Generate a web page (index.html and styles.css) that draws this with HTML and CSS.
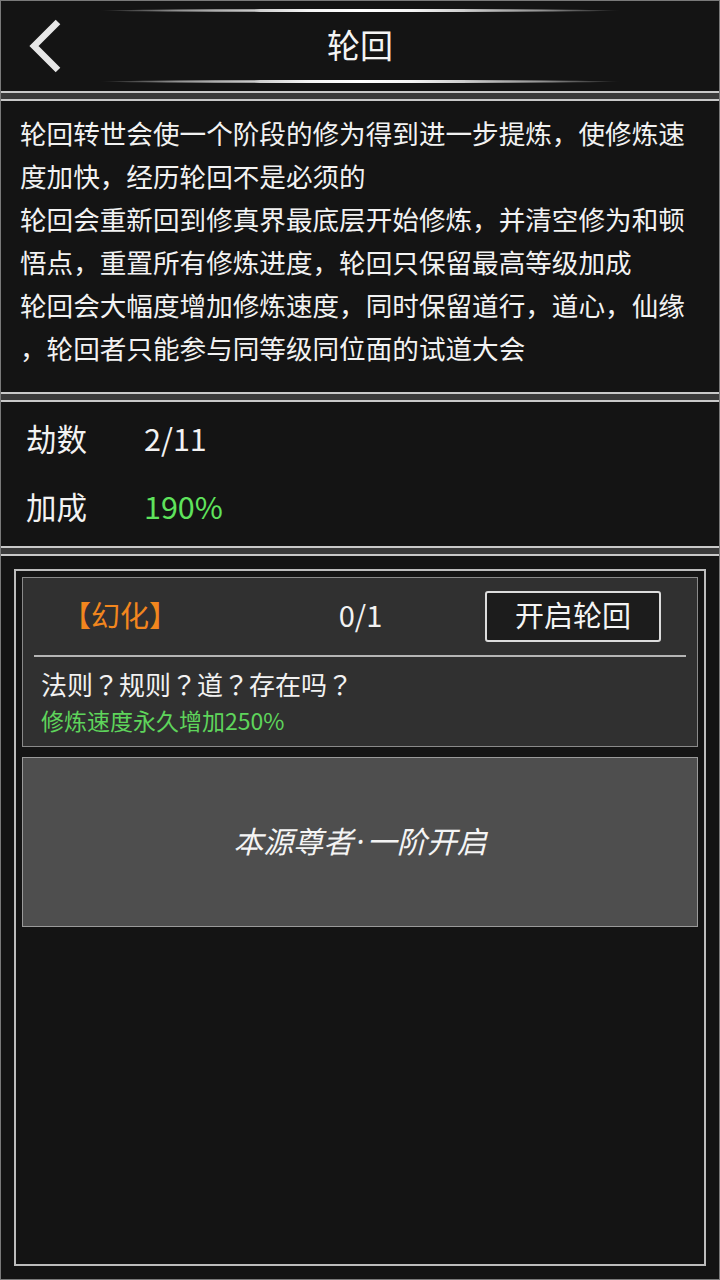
FILE: index.html
```html
<!DOCTYPE html>
<html lang="zh-CN">
<head>
<meta charset="utf-8">
<title>轮回</title>
<link rel="stylesheet" href="styles.css">
</head>
<body>
<div class="screen">
  <header class="header">
    <div class="glow glow-top"></div>
    <div class="header-row">
      <button class="back" aria-label="返回">
        <svg width="42" height="56" viewBox="0 0 42 56">
          <polyline points="32,4 8,28 32,52" fill="none" stroke="#e6e6e6" stroke-width="6.5" stroke-linecap="butt" stroke-linejoin="miter"/>
        </svg>
      </button>
      <h1 class="title">轮回</h1>
      <div></div>
    </div>
    <div class="glow glow-bottom"></div>
  </header>

  <section class="panel desc">
    <span class="line">轮回转世会使一个阶段的修为得到进一步提炼，使修炼速</span>
    <span class="line">度加快，经历轮回不是必须的</span>
    <span class="line">轮回会重新回到修真界最底层开始修炼，并清空修为和顿</span>
    <span class="line">悟点，重置所有修炼进度，轮回只保留最高等级加成</span>
    <span class="line">轮回会大幅度增加修炼速度，同时保留道行，道心，仙缘</span>
    <span class="line">，轮回者只能参与同等级同位面的试道大会</span>
  </section>

  <section class="panel stats">
    <div class="stat"><span class="stat-label">劫数</span><span class="stat-value">2/11</span></div>
    <div class="stat"><span class="stat-label">加成</span><span class="stat-value green">190%</span></div>
  </section>

  <section class="panel list-panel">
    <div class="frame">
      <div class="card card-active">
        <div class="card-row">
          <span class="tag">【幻化】</span>
          <span class="count">0/1</span>
          <button class="start-btn">开启轮回</button>
        </div>
        <div class="divider"></div>
        <div class="card-body">
          <div class="card-desc">法则<span class="q" lang="zh-Hant-TW">？</span>规则<span class="q" lang="zh-Hant-TW">？</span>道<span class="q" lang="zh-Hant-TW">？</span>存在吗<span class="q" lang="zh-Hant-TW">？</span></div>
          <div class="card-effect">修炼速度永久增加250%</div>
        </div>
      </div>
      <div class="card card-locked">
        <span class="locked-text">本源尊者<span class="dot">·</span>一阶开启</span>
      </div>
    </div>
  </section>
</div>
</body>
</html>
```

FILE: styles.css
```css
* { box-sizing: border-box; }

html, body {
  margin: 0;
  padding: 0;
  background: #141414;
}

body {
  font-family: "Noto Sans CJK SC", "Noto Sans", sans-serif;
  color: #f2f2f2;
}

.screen {
  width: 720px;
  height: 1280px;
  display: flex;
  flex-direction: column;
  gap: 6px;
  background: #3a3a3a;
  border: 1px solid #7a7a7a;
}

.header {
  height: 92px;
  flex: none;
  background: #141414;
  border-bottom: 2px solid #c9c9c9;
  display: flex;
  flex-direction: column;
  align-items: center;
  padding-top: 8px;
}

.glow {
  width: 520px;
  height: 3px;
  border-radius: 50%;
  background: linear-gradient(to right, rgba(255,255,255,0) 0%, rgba(230,230,230,0.6) 15%, #f4f4f4 40%, #ffffff 50%, #f4f4f4 60%, rgba(230,230,230,0.6) 85%, rgba(255,255,255,0) 100%);
  flex: none;
}

.header-row {
  width: 100%;
  height: 68px;
  display: grid;
  grid-template-columns: 1fr auto 1fr;
  align-items: center;
}

.back {
  justify-self: start;
  margin-left: 25px;
  background: none;
  border: none;
  padding: 0;
  display: flex;
}

.title {
  margin: 0 0 3px 0;
  font-size: 33px;
  font-weight: 400;
  color: #f4f4f4;
  line-height: 1;
}

.panel {
  background: #141414;
  border-top: 2px solid #c9c9c9;
  border-bottom: 2px solid #c9c9c9;
  flex: none;
}

.desc {
  height: 295px;
  padding: 10px 10px 0 19px;
  display: flex;
  flex-direction: column;
}

.line {
  display: block;
  white-space: nowrap;
  font-size: 26.6px;
  line-height: 43px;
  color: #f2f2f2;
}

.stats {
  height: 148px;
  padding: 2px 0 0 25px;
}

.stat {
  display: flex;
  align-items: center;
  height: 68px;
  font-size: 30.5px;
}

.stat-label {
  width: 118px;
}

.green { color: #5fe35c; }

.list-panel {
  flex: 1;
  border-bottom: none;
  padding: 13px;
  display: flex;
}

.frame {
  flex: 1;
  border: 2px solid #bdbdbd;
  padding: 6px;
  display: flex;
  flex-direction: column;
  gap: 10px;
}

.card {
  height: 170px;
  flex: none;
}

.card-active {
  background: #303030;
  border: 1px solid #8a8a8a;
  display: flex;
  flex-direction: column;
}

.card-row {
  height: 77px;
  display: grid;
  grid-template-columns: 194px 1fr 176px;
  align-items: center;
  padding-right: 36px;
}

.tag {
  justify-self: center;
  color: #f2861e;
  font-size: 29px;
  line-height: 1;
  padding-bottom: 5px;
}

.count {
  justify-self: center;
  padding-left: 19px;
  font-size: 29px;
  line-height: 1;
  padding-bottom: 5px;
}

.start-btn {
  width: 176px;
  height: 51px;
  background: #1c1c1c;
  border: 2px solid #dcdcdc;
  border-radius: 3px;
  color: #f4f4f4;
  font-family: inherit;
  font-size: 29px;
  padding: 0 0 4px 0;
  line-height: 1;
}

.divider {
  height: 2px;
  margin: 0 11px;
  background: #b5b5b5;
  flex: none;
}

.card-body {
  padding: 9px 0 0 18px;
}

.card-desc {
  font-size: 26px;
  line-height: 36px;
}

.q {
  font-family: "Noto Sans CJK TC", "Noto Sans CJK JP", sans-serif;
}

.card-effect {
  font-size: 23px;
  line-height: 36px;
  color: #5ed45b;
}

.card-locked {
  background: #4e4e4e;
  border: 1px solid #9a9a9a;
  display: flex;
  align-items: center;
  justify-content: center;
}

.locked-text {
  font-size: 30px;
  font-style: italic;
  color: #f4f4f4;
  padding-bottom: 4px;
}

.dot {
  font-family: "Noto Sans", sans-serif;
  padding: 0 3px;
}
```
